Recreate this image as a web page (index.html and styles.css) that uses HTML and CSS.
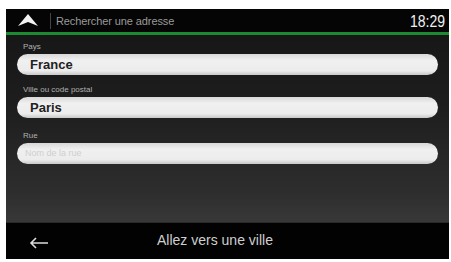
FILE: index.html
```html
<!DOCTYPE html>
<html>
<head>
<meta charset="utf-8">
<link rel="stylesheet" href="styles.css">
</head>
<body>
<div class="screen">
  <div class="header">
    <svg class="chev" width="20" height="12" viewBox="0 0 20 12">
      <path d="M10 0 L20 12 L10 8 L0 12 Z" fill="#f2f2f2"/>
    </svg>
    <div class="sep"></div>
    <div class="title">Rechercher une adresse</div>
    <div class="time">18:29</div>
  </div>
  <div class="green"></div>
  <div class="content">
    <div class="label">Pays</div>
    <div class="field">France</div>
    <div class="label">Ville ou code postal</div>
    <div class="field">Paris</div>
    <div class="label label-rue">Rue</div>
    <div class="field placeholder">Nom de la rue</div>
  </div>
  <div class="bottom">
    <svg class="back" width="20" height="12" viewBox="0 0 20 12">
      <path d="M19 6 H2 M7 1 L2 6 L7 11" stroke="#dcdcdc" stroke-width="1.6" fill="none"/>
    </svg>
    <div class="go">Allez vers une ville</div>
    <div class="right"></div>
  </div>
</div>
</body>
</html>
```
FILE: styles.css
```css
html, body {
  margin: 0;
  padding: 0;
  background: #ffffff;
}
.screen {
  margin: 9px 2px 0 6px;
  width: 443px;
  height: 250px;
  background: #000;
  display: flex;
  flex-direction: column;
  font-family: "Liberation Sans", Arial, sans-serif;
  overflow: hidden;
}
.header {
  height: 23px;
  display: flex;
  align-items: center;
  background: #050505;
  padding: 0 4px 0 12px;
}
.chev {
  margin-top: -1px;
}
.sep {
  width: 1px;
  height: 16px;
  background: #444;
  margin-left: 12px;
  margin-right: 5px;
}
.title {
  color: #9a9a9a;
  font-size: 11px;
  flex: 1;
  letter-spacing: -0.1px;
}
.time {
  color: #f0f0f0;
  font-size: 14px;
  transform: scaleY(1.2);
}
.green {
  height: 3px;
  background: #1c8a30;
}
.content {
  flex: 1;
  background: linear-gradient(#171717, #1e1e1e 40%, #2e2e2e 85%, #383838 100%);
  padding: 4px 11px 0 11px;
  display: flex;
  flex-direction: column;
}
.label {
  color: #b0b0b0;
  font-size: 8px;
  height: 15px;
  line-height: 15px;
  padding-left: 6px;
}
.label-rue {
  margin-top: 3px;
}
.field {
  height: 21px;
  border-radius: 11px;
  background: linear-gradient(#d8d8d8, #f0f0f0 30%, #ececec 80%, #c8c8c8);
  color: #222;
  font-weight: bold;
  font-size: 13px;
  line-height: 21px;
  padding-left: 13px;
  margin-bottom: 7px;
}
.field.placeholder {
  color: #cfcfcf;
  font-weight: normal;
  font-size: 9px;
  padding-left: 8px;
}
.bottom {
  height: 36px;
  background: #020202;
  display: flex;
  align-items: center;
  border-top: 1px solid #2a2a2a;
}
.back {
  margin-left: 23px;
  margin-top: 4px;
}
.go {
  color: #cfcfcf;
  font-size: 14px;
  margin-left: 108px;
  margin-top: -2px;
}
.right {
  flex: 1;
}
```
